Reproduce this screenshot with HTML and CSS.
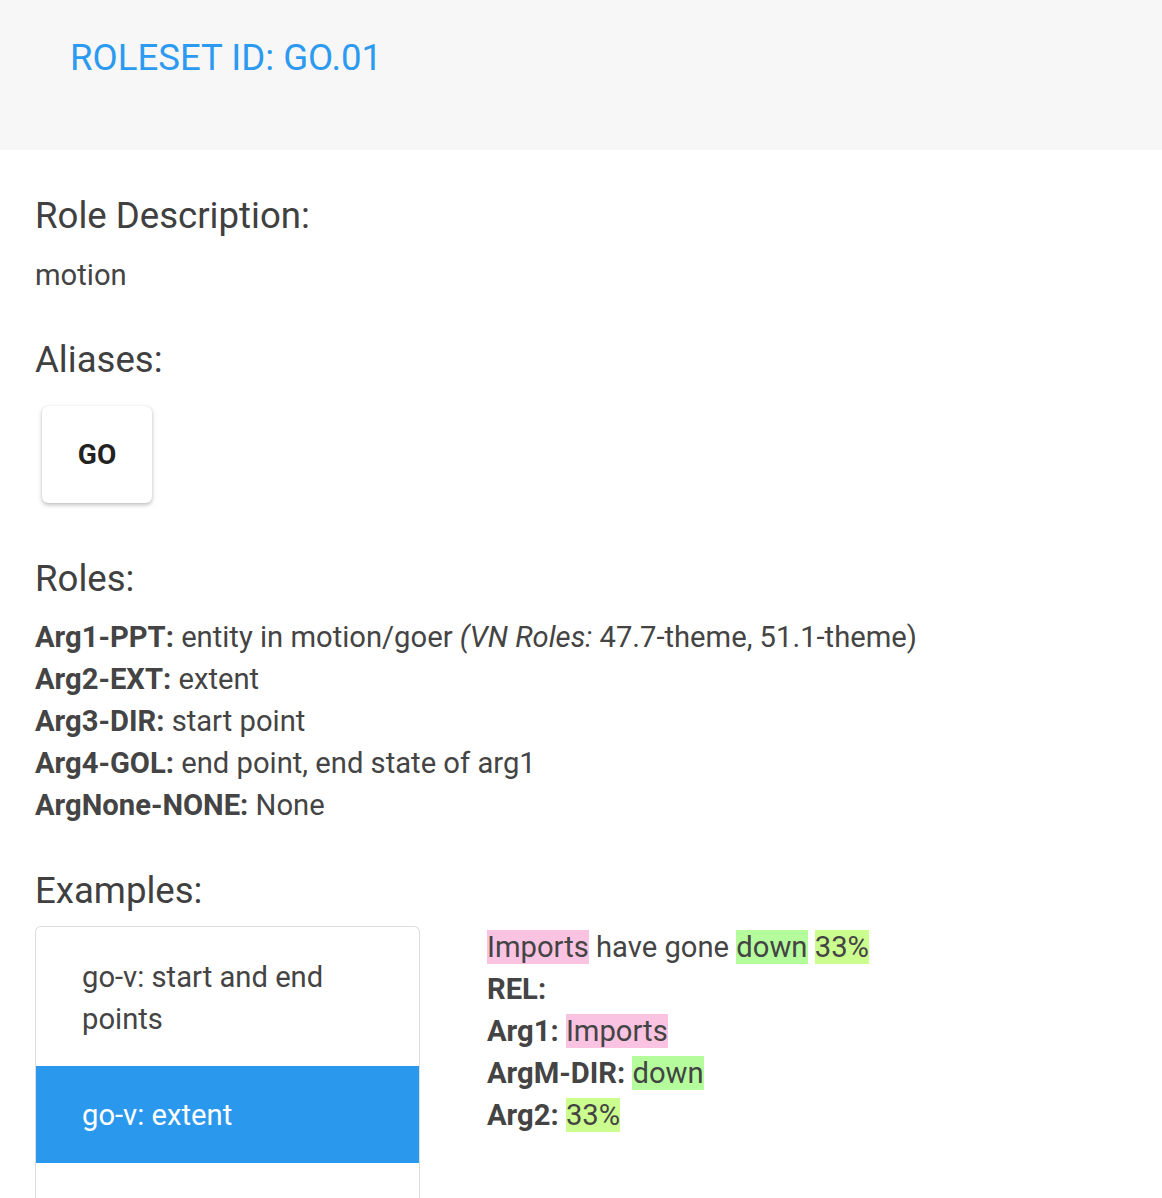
FILE: index.html
```html
<!DOCTYPE html>
<html>
<head>
<meta charset="utf-8">
<link rel="stylesheet" href="styles.css">
</head>
<body>
<header class="top">
  <h1 class="title">ROLESET ID: GO.01</h1>
</header>
<main class="content">
  <h2 class="heading">Role Description:</h2>
  <p class="text">motion</p>
  <h2 class="heading">Aliases:</h2>
  <div class="aliases"><button class="alias">GO</button></div>
  <h2 class="heading">Roles:</h2>
  <div class="roles">
    <div><b>Arg1-PPT:</b> entity in motion/goer <i>(VN Roles:</i> 47.7-theme, 51.1-theme)</div>
    <div><b>Arg2-EXT:</b> extent</div>
    <div><b>Arg3-DIR:</b> start point</div>
    <div><b>Arg4-GOL:</b> end point, end state of arg1</div>
    <div><b>ArgNone-NONE:</b> None</div>
  </div>
  <h2 class="heading">Examples:</h2>
  <div class="examples">
    <ul class="list">
      <li class="item">go-v: start and end points</li>
      <li class="item active">go-v: extent</li>
      <li class="item"></li>
    </ul>
    <div class="example">
      <div><span class="hl-pink">Imports</span> have gone <span class="hl-green">down</span> <span class="hl-lime">33%</span></div>
      <div><b>REL:</b></div>
      <div><b>Arg1:</b> <span class="hl-pink">Imports</span></div>
      <div><b>ArgM-DIR:</b> <span class="hl-green">down</span></div>
      <div><b>Arg2:</b> <span class="hl-lime">33%</span></div>
    </div>
  </div>
</main>
</body>
</html>
```
FILE: styles.css
```css
html, body { margin: 0; padding: 0; }
body {
  font-family: Roboto, "Liberation Sans", sans-serif;
  color: #444;
  background: #fff;
  font-size: 29.2px;
  line-height: 42px;
}
.top {
  background: #f7f7f7;
  height: 150px;
  padding: 0 70px;
  box-sizing: border-box;
  display: flex;
  align-items: flex-start;
}
.title {
  margin: 34px 0 0;
  font-size: 36.6px;
  font-weight: 400;
  color: #2b9af0;
  line-height: 48px;
}
.content { padding: 0 35px; }
.heading {
  font-size: 36.6px;
  font-weight: 400;
  margin: 0;
  line-height: 48px;
  color: #404040;
}
.content > .heading:first-child { margin-top: 42px; }
.text { margin: 14px 0 40px; }
.aliases { padding: 22px 0 52px 7px; }
.alias {
  font-family: Roboto, "Liberation Sans", sans-serif;
  font-size: 28px;
  font-weight: 700;
  color: #222;
  width: 110px;
  height: 97px;
  border: none;
  border-radius: 6px;
  background: #fff;
  box-shadow: 0 2px 4px rgba(0,0,0,0.25), 0 0 1px rgba(0,0,0,0.15);
}
.roles { margin: 13px 0 41px; }
.roles b { font-weight: 700; }
.examples {
  display: flex;
  gap: 67px;
  margin-top: 11px;
  align-items: flex-start;
}
.list {
  list-style: none;
  margin: 0;
  padding: 0;
  width: 385px;
  flex: none;
  border: 1px solid #ddd;
  border-radius: 6px 6px 0 0;
  border-bottom: none;
  box-sizing: border-box;
  height: 290px;
  overflow: hidden;
}
.item {
  padding: 29px 46px 26px;
  min-height: 42px;
}
.item.active {
  background: #2a98ed;
  color: #fff;
  margin: 0 -1px;
  padding: 28px 46px 27px 47px;
}
.example { padding-top: 0; }
.hl-pink { background: #fac3e1; }
.hl-green { background: #b5fc9c; }
.hl-lime { background: #cbfe8e; }
```
